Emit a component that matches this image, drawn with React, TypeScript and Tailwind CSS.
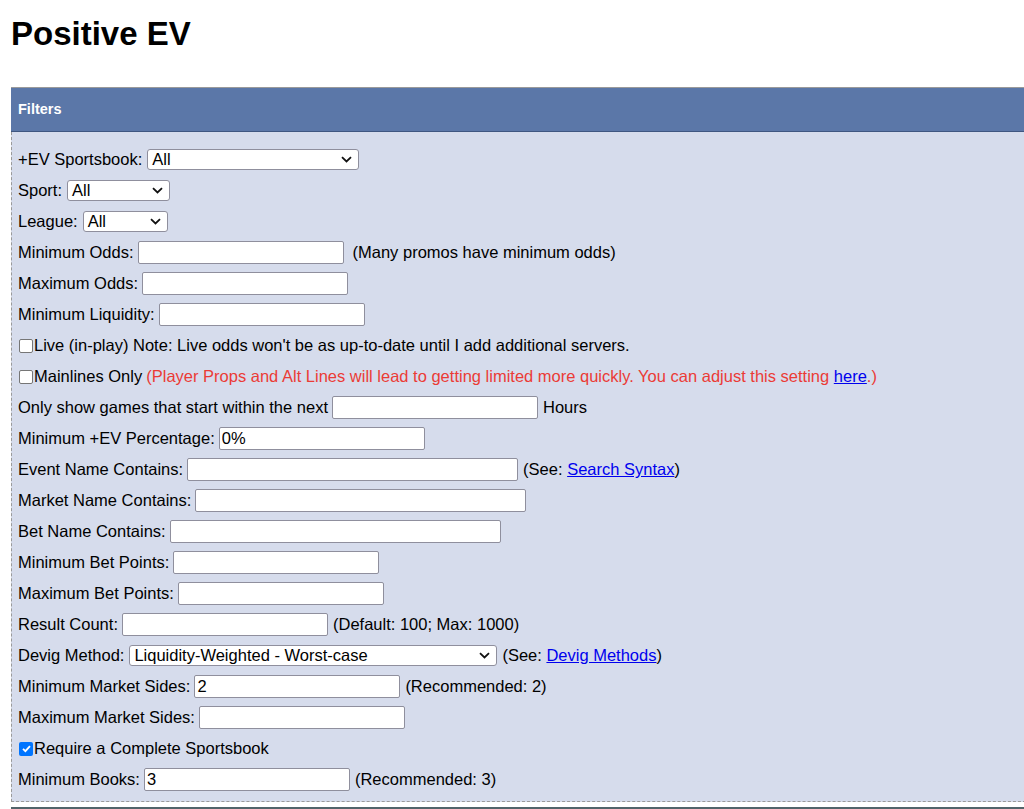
import React from 'react';

function Select({ value, width }: { value: string; width: string }) {
  return (
    <div className={`relative h-[21px] ${width} rounded-[3px] border border-[#8f8f9d] bg-white`}>
      <div className="flex h-full items-center pl-[4px] text-[16.5px] leading-none text-black">{value}</div>
      <svg className="absolute right-[6px] top-[6px] h-[7px] w-[11px]" viewBox="0 0 11 7" fill="none">
        <path d="M1 1.2l4.5 4.3 4.5-4.3" stroke="#111" strokeWidth="1.8" />
      </svg>
    </div>
  );
}

function TextBox({ value = '', width = 'w-[206px]' }: { value?: string; width?: string }) {
  return (
    <input
      readOnly
      value={value}
      className={`h-[23px] ${width} rounded-[2px] border border-[#8f8f9d] bg-white px-[2px] text-[16.5px] text-black outline-none`}
    />
  );
}

function Row({ children }: { children: React.ReactNode }) {
  return <div className="flex h-[31px] items-center whitespace-nowrap">{children}</div>;
}

function Link({ children }: { children: React.ReactNode }) {
  return <a className="text-[#0000ee] underline">{children}</a>;
}

// drawn by hand so the size matches the native 14px box in the screenshot
function Check({ checked = false }: { checked?: boolean }) {
  if (checked) {
    return (
      <span className="ml-[1px] mr-[1px] flex h-[14px] w-[14px] items-center justify-center rounded-[2px] bg-[#0075ff]">
        <svg viewBox="0 0 12 12" className="h-[11px] w-[11px]" fill="none">
          <path d="M2.2 6.3l2.6 2.6 5-5.6" stroke="white" strokeWidth="2" />
        </svg>
      </span>
    );
  }
  return (
    <span className="ml-[1px] mr-[1px] h-[14px] w-[14px] rounded-[2px] border border-[#767676] bg-white" />
  );
}

export default function App() {
  return (
    <div className="w-[1024px] overflow-hidden bg-white px-[11px] font-['Liberation_Sans',Arial,sans-serif] text-black">
      <h1 className="mt-[15px] text-[33px] font-bold leading-[38px]">Positive EV</h1>

      <div className="mt-[34px] w-[1040px]">
        <div className="flex h-[45px] items-center border-t border-b border-t-[#9a9a9a] border-b-[#3f5680] bg-[#5b77a8] px-[7px] text-[14.5px] font-bold text-white">
          Filters
        </div>
        <div className="border-b border-l border-dashed border-[#9a9a9a] bg-[#d6dcec] pb-[6px] pl-[6px] pt-[12px] text-[16.5px]">
          <Row>
            <span className="mr-[5px]">+EV Sportsbook:</span>
            <Select value="All" width="w-[212px]" />
          </Row>
          <Row>
            <span className="mr-[5px]">Sport:</span>
            <Select value="All" width="w-[103px]" />
          </Row>
          <Row>
            <span className="mr-[5px]">League:</span>
            <Select value="All" width="w-[85px]" />
          </Row>
          <Row>
            <span className="mr-[4px]">Minimum Odds:</span>
            <TextBox />
            <span className="ml-[9px]">(Many promos have minimum odds)</span>
          </Row>
          <Row>
            <span className="mr-[4px]">Maximum Odds:</span>
            <TextBox />
          </Row>
          <Row>
            <span className="mr-[4px]">Minimum Liquidity:</span>
            <TextBox />
          </Row>
          <Row>
            <Check />
            <span>Live (in-play) Note: Live odds won't be as up-to-date until I add additional servers.</span>
          </Row>
          <Row>
            <Check />
            <span>Mainlines Only</span>
            <span className="ml-[4px] text-[#eb3b36]">
              (Player Props and Alt Lines will lead to getting limited more quickly. You can adjust this setting{' '}
              <Link>here</Link>.)
            </span>
          </Row>
          <Row>
            <span className="mr-[4px]">Only show games that start within the next</span>
            <TextBox />
            <span className="ml-[5px]">Hours</span>
          </Row>
          <Row>
            <span className="mr-[4px]">Minimum +EV Percentage:</span>
            <TextBox value="0%" />
          </Row>
          <Row>
            <span className="mr-[4px]">Event Name Contains:</span>
            <TextBox width="w-[331px]" />
            <span className="ml-[5px]">
              (See: <Link>Search Syntax</Link>)
            </span>
          </Row>
          <Row>
            <span className="mr-[4px]">Market Name Contains:</span>
            <TextBox width="w-[331px]" />
          </Row>
          <Row>
            <span className="mr-[4px]">Bet Name Contains:</span>
            <TextBox width="w-[331px]" />
          </Row>
          <Row>
            <span className="mr-[4px]">Minimum Bet Points:</span>
            <TextBox />
          </Row>
          <Row>
            <span className="mr-[4px]">Maximum Bet Points:</span>
            <TextBox />
          </Row>
          <Row>
            <span className="mr-[4px]">Result Count:</span>
            <TextBox />
            <span className="ml-[5px]">(Default: 100; Max: 1000)</span>
          </Row>
          <Row>
            <span className="mr-[5px]">Devig Method:</span>
            <Select value="Liquidity-Weighted - Worst-case" width="w-[368px]" />
            <span className="ml-[5px]">
              (See: <Link>Devig Methods</Link>)
            </span>
          </Row>
          <Row>
            <span className="mr-[4px]">Minimum Market Sides:</span>
            <TextBox value="2" />
            <span className="ml-[5px]">(Recommended: 2)</span>
          </Row>
          <Row>
            <span className="mr-[4px]">Maximum Market Sides:</span>
            <TextBox />
          </Row>
          <Row>
            <Check checked />
            <span>Require a Complete Sportsbook</span>
          </Row>
          <Row>
            <span className="mr-[4px]">Minimum Books:</span>
            <TextBox value="3" />
            <span className="ml-[5px]">(Recommended: 3)</span>
          </Row>
        </div>
        <div className="mt-[5px] h-[4px] border-t-2 border-[#52646a]" />
      </div>
    </div>
  );
}
